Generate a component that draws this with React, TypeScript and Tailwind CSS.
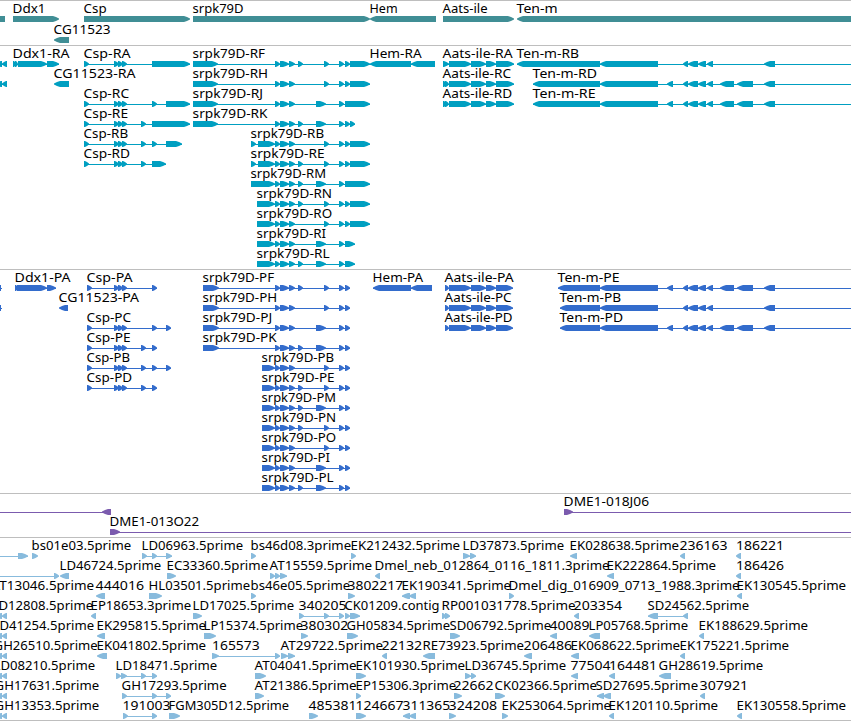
import React from "react";

type Span = [number, number];
type Label = [number, number, string];
type Dir = "R" | "L" | "B";

interface Feature {
  dir: Dir;
  spans: Span[];
  line?: Span;
  label?: Label;
}

type Row = Feature[];

const f = (dir: Dir, spans: Span[], label?: Label, line?: Span): Feature => ({ dir, spans, label, line });

const genes: Row[] = [
  [
    f("B", [[0, 5]]),
    f("R", [[13, 59]], [13, 45, "Ddx1"]),
    f("R", [[84, 190]], [84, 106, "Csp"]),
    f("R", [[193, 370]], [193, 243, "srpk79D"]),
    f("L", [[370, 436]], [370, 397, "Hem"]),
    f("R", [[443, 514]], [443, 487, "Aats-ile"]),
    f("L", [[517, 860]], [517, 557, "Ten-m"]),
  ],
  [f("L", [[54, 69]], [54, 110, "CG11523"])],
];

// Exons shared by the splice variants of each gene.
const cspMid: Span[] = [[114, 119], [118, 123], [122, 127]];
const c141: Span = [141, 146];
const c152: Span = [152, 157];
const c166: Span = [166, 171];
const kHead: Span[] = [[275, 280], [280, 289], [289, 295]];
const k298: Span = [298, 303];
const k316: Span = [316, 326];
const k324: Span = [324, 329];
const k339: Span = [339, 344];
const k345: Span = [345, 350];
const k350: Span = [350, 370];
const kWide: Span = [345, 370];
const tenTail: Span[] = [[683, 688], [688, 698], [698, 706], [707, 713], [764, 775]];
const tenFull: Span[] = [[667, 673], ...tenTail, [720, 734], [737, 753]];
const aats: Span[] = [[449, 471], [471, 486], [486, 496], [496, 514]];

const transcripts: Row[] = [
  [
    f("L", [[-5, 2], [2, 7]]),
    f("R", [[13, 16], [15, 18], [18, 47], [47, 59]], [13, 69, "Ddx1-RA"]),
    f("R", [[84, 89], ...cspMid, [152, 190]], [84, 130, "Csp-RA"]),
    f("R", [[193, 218], ...kHead, k298, k324, k339, k345, k350], [193, 264.5, "srpk79D-RF"]),
    f("L", [[370, 411], [411, 435]], [370, 421, "Hem-RA"]),
    f("R", [[443, 449], ...aats], [443, 512, "Aats-ile-RA"]),
    f("L", [[517, 600], [600, 658], ...tenTail], [517, 578.5, "Ten-m-RB"], [517, 851]),
  ],
  [
    f("L", [[-5, 2], [2, 7]]),
    f("L", [[54, 69]], [54, 135, "CG11523-RA"]),
    f("R", [[193, 218], ...kHead, k324, k339, k345, k350], [193, 267.5, "srpk79D-RH"]),
    f("R", [[443, 447], [445, 449], ...aats], [443, 510.5, "Aats-ile-RC"]),
    f("L", [[533, 600], [600, 658], ...tenFull], [533, 596.5, "Ten-m-RD"], [533, 851]),
  ],
  [
    f("R", [[84, 89], ...cspMid, c152, [166, 190]], [84, 128.5, "Csp-RC"]),
    f("R", [[193, 218], ...kHead, k316, k339, kWide], [193, 262.5, "srpk79D-RJ"]),
    f("R", [[443, 447], [445, 449], ...aats], [443, 511.5, "Aats-ile-RD"]),
    f("L", [[533, 600], [600, 658], ...tenFull], [533, 595, "Ten-m-RE"], [533, 851]),
  ],
  [
    f("R", [[84, 89], ...cspMid, c141, [152, 190]], [84, 127.5, "Csp-RE"]),
    f("R", [[193, 218], ...kHead, k298, k316, k339, k345, [350, 355]], [193, 267, "srpk79D-RK"]),
  ],
  [
    f("R", [[84, 89], ...cspMid, c141, c152, [166, 182]], [84, 127.5, "Csp-RB"]),
    f("R", [[251, 256], [258, 275], ...kHead, k324, k339, k345, k350], [251, 323.5, "srpk79D-RB"]),
  ],
  [
    f("R", [[84, 89], ...cspMid, c141, [152, 166]], [84, 129.5, "Csp-RD"]),
    f("R", [[251, 256], [258, 275], ...kHead, k298, k324, k339, k345, k350], [251, 324, "srpk79D-RE"]),
  ],
  [f("R", [[251, 275], ...kHead, k298, k316, k339, kWide], [251, 325.5, "srpk79D-RM"])],
  [f("R", [[257, 275], ...kHead, k298, k324, k339, k345, k350], [257, 331.5, "srpk79D-RN"])],
  [f("R", [[257, 275], ...kHead, k324, k339, k345, k350], [257, 331.5, "srpk79D-RO"])],
  [f("R", [[257, 275], ...kHead, k316, k339, [345, 355]], [257, 325.5, "srpk79D-RI"])],
  [f("R", [[257, 275], ...kHead, k298, k316, k339, [345, 355]], [257, 329, "srpk79D-RL"])],
];

const aatsP: Span[] = [[445, 449], [449, 471], [471, 486], [486, 496], [496, 513]];

const proteins: Row[] = [
  [
    f("B", [[0, 1]], undefined, [0, 2]),
    f("R", [[15, 18], [17, 47], [47, 56]], [15, 70, "Ddx1-PA"]),
    f("R", [[87, 92], ...cspMid, c152], [87, 132, "Csp-PA"]),
    f("R", [[203, 219], ...kHead, k298, k324, k339, k345], [203, 273.5, "srpk79D-PF"]),
    f("L", [[373, 411], [411, 432]], [373, 422.5, "Hem-PA"]),
    f("R", aatsP, [445, 513, "Aats-ile-PA"]),
    f("L", [[558, 600], [600, 658], ...tenFull], [558, 619, "Ten-m-PE"], [558, 851]),
  ],
  [
    f("B", [[0, 1]], undefined, [0, 2]),
    f("L", [[59, 68]], [59, 138.5, "CG11523-PA"]),
    f("R", [[203, 219], ...kHead, k324, k339, k345], [203, 276.5, "srpk79D-PH"]),
    f("R", aatsP, [445, 511, "Aats-ile-PC"]),
    f("L", [[560, 600], [600, 658], ...tenTail], [560, 620.5, "Ten-m-PB"], [560, 851]),
  ],
  [
    f("R", [[87, 92], ...cspMid, c152, c166], [87, 130.5, "Csp-PC"]),
    f("R", [[203, 219], ...kHead, k316, k339, k345], [203, 271.5, "srpk79D-PJ"]),
    f("R", aatsP, [445, 512, "Aats-ile-PD"]),
    f("L", [[560, 600], [600, 658], ...tenFull], [560, 622.5, "Ten-m-PD"], [560, 851]),
  ],
  [
    f("R", [[87, 92], ...cspMid, c141, c152], [87, 130, "Csp-PE"]),
    f("R", [[203, 219], ...kHead, k298, k316, k339, k345], [203, 276, "srpk79D-PK"]),
  ],
  [
    f("R", [[87, 92], ...cspMid, c141, c152, c166], [87, 129.5, "Csp-PB"]),
    f("R", [[262, 275], ...kHead, k324, k339, k345], [262, 333.5, "srpk79D-PB"]),
  ],
  [
    f("R", [[87, 92], ...cspMid, c141, c152], [87, 131.5, "Csp-PD"]),
    f("R", [[262, 275], ...kHead, k298, k324, k339, k345], [262, 334, "srpk79D-PE"]),
  ],
  [f("R", [[262, 275], ...kHead, k298, k316, k339, k345], [262, 335.5, "srpk79D-PM"])],
  [f("R", [[262, 275], ...kHead, k298, k324, k339, k345], [262, 335.5, "srpk79D-PN"])],
  [f("R", [[262, 275], ...kHead, k324, k339, k345], [262, 335.5, "srpk79D-PO"])],
  [f("R", [[262, 275], ...kHead, k316, k339, k345], [262, 329.5, "srpk79D-PI"])],
  [f("R", [[262, 275], ...kHead, k298, k316, k339, k345], [262, 333, "srpk79D-PL"])],
];

const clones: Row[] = [
  [
    f("L", [[102, 111]], undefined, [0, 111]),
    f("R", [[564, 573]], [564, 648.5, "DME1-018J06"], [564, 851]),
  ],
  [f("R", [[110, 120]], [110, 198.5, "DME1-013O22"], [110, 851])],
];

const edge = (label: Label): Feature => f("L", [[-5, 2], [2, 7]], label);

const ests: Row[] = [
  [
    f("R", [[18, 28]], undefined, [0, 28]),
    f("R", [[32, 38]], [32, 130.5, "bs01e03.5prime"]),
    f("R", [[142, 147], [152, 157], [166, 172]], [142, 242.5, "LD06963.5prime"]),
    f("R", [[251, 256]], [251, 350.5, "bs46d08.3prime"]),
    f("R", [[351, 356]], [351, 459.5, "EK212432.5prime"]),
    f("R", [[463, 470], [470, 476]], [463, 563.5, "LD37873.5prime"]),
    f("L", [[570, 577]], [570, 678.5, "EK028638.5prime"]),
    f("L", [[680, 685]], [680, 727, "236163"]),
    f("L", [[736, 741]], [736.5, 783.5, "186221"]),
  ],
  [
    f("R", [[54, 59]], undefined, [0, 59]),
    f("L", [[60, 69]], [60, 160.5, "LD46724.5prime"]),
    f("R", [[167, 176]], [167, 267.5, "EC33360.5prime"]),
    f("R", [[270, 275], [275, 280], [280, 287]], [270, 371.5, "AT15559.5prime"]),
    f("L", [[375, 380]], [375, 609, "Dmel_neb_012864_0116_1811.3prime"]),
    f("L", [[607, 614]], [607, 715.5, "EK222864.5prime"]),
    f("L", [[736, 741]], [736.5, 783.5, "186426"]),
  ],
  [
    f("R", [], [-8, 93.5, "AT13046.5prime"]),
    f("L", [[96, 105]], [96, 143.5, "444016"]),
    f("R", [[149, 162]], [149, 249.5, "HL03501.5prime"]),
    f("R", [[251, 256]], [251, 349.5, "bs46e05.5prime"]),
    f("R", [[348, 355]], [348, 402.5, "3802217"]),
    f("L", [[402, 410], [409, 416]], [402, 510.5, "EK190341.5prime"]),
    f("R", [[509, 514]], [509, 739, "Dmel_dig_016909_0713_1988.3prime"]),
    f("L", [[737, 742]], [737, 845.5, "EK130545.5prime"]),
  ],
  [
    edge([-8, 92.5, "LD12808.5prime"]),
    f("L", [[91, 96]], [91, 190.5, "EP18653.3prime"]),
    f("R", [[193, 202]], [193, 293.5, "LD17025.5prime"]),
    f("R", [[299, 304], [324, 329], [339, 344]], [299, 346, "340205"]),
    f("R", [[345, 350], [350, 360]], [345, 439, "CK01209.contig"]),
    f("R", [[442, 446], [445, 450]], [442, 575, "RP001031778.5prime"]),
    f("L", [[574, 579]], [574, 621.5, "203354"]),
    f("L", [[648, 658], [683, 688]], [648, 748.5, "SD24562.5prime"]),
  ],
  [
    edge([-7, 93.5, "LD41254.5prime"]),
    f("L", [[97, 105]], [97, 205.5, "EK295815.5prime"]),
    f("R", [[204, 216]], [204, 302.5, "LP15374.5prime"]),
    f("R", [[301, 308]], [301, 347.5, "380302"]),
    f("R", [[347, 358]], [347, 449.5, "GH05834.5prime"]),
    f("R", [[450, 460]], [450, 550.5, "SD06792.5prime"]),
    f("L", [[550, 557]], [550, 589, "40089"]),
    f("L", [[589, 600]], [589, 687.5, "LP05768.5prime"]),
    f("L", [[699, 704]], [699, 807.5, "EK188629.5prime"]),
  ],
  [
    edge([-6, 97, "GH26510.5prime"]),
    f("L", [[97, 107]], [97, 205.5, "EK041802.5prime"]),
    f("R", [[212, 219], [275, 280]], [212.5, 259, "165573"]),
    f("R", [[281, 288], [288, 295]], [281, 382.5, "AT29722.5prime"]),
    f("L", [[382, 387]], [382, 421.5, "22132"]),
    f("L", [[423, 435]], [423, 523.5, "RE73923.5prime"]),
    f("L", [[524, 532]], [524, 571.5, "206486"]),
    f("L", [[571, 579]], [571, 679.5, "EK068622.5prime"]),
    f("L", [[680, 685]], [680, 788.5, "EK175221.5prime"]),
  ],
  [
    edge([-6, 94.5, "LD08210.5prime"]),
    f("R", [[116, 121], [121, 127], [141, 146], [152, 157]], [116, 216.5, "LD18471.5prime"]),
    f("R", [[255, 266]], [255, 356, "AT04041.5prime"]),
    f("R", [[356, 366]], [356, 464.5, "EK101930.5prime"]),
    f("R", [[465, 471], [471, 476]], [465, 565.5, "LD36745.5prime"]),
    f("L", [[571, 578]], [571, 610, "77504"]),
    f("L", [[609, 615]], [609.5, 656.5, "164481"]),
    f("L", [[659, 671]], [659, 762.5, "GH28619.5prime"]),
  ],
  [
    edge([-5, 98.5, "GH17631.5prime"]),
    f("R", [[122, 127], [152, 157], [166, 171]], [122, 226, "GH17293.5prime"]),
    f("R", [[255, 264]], [255, 356, "AT21386.5prime"]),
    f("R", [[356, 361]], [356, 455.5, "EP15306.3prime"]),
    f("R", [[454, 462]], [454, 493, "22662"]),
    f("R", [[495, 505]], [495, 596.5, "CK02366.5prime"]),
    f("L", [[597, 604], [603, 611]], [596, 697.5, "SD27695.5prime"]),
    f("L", [[700, 705]], [700, 747.5, "307921"]),
  ],
  [
    edge([-5, 98.5, "GH13353.5prime"]),
    f("R", [[123, 128], [152, 157]], [123, 170, "191003"]),
    f("R", [[169, 180]], [169, 288.5, "FGM305D12.5prime"]),
    f("R", [[309, 318]], [309, 356, "485381"]),
    f("R", [[356, 366]], [356, 403, "124667"]),
    f("L", [[403, 410], [409, 416]], [403, 449.5, "311365"]),
    f("R", [[449, 456]], [449, 496.5, "324208"]),
    f("R", [[502, 508]], [502, 610.5, "EK253064.5prime"]),
    f("L", [[609, 614]], [609, 717.5, "EK120110.5prime"]),
    f("L", [[737, 742]], [737, 845.5, "EK130558.5prime"]),
  ],
];

function arrow(dir: Dir, [a, b]: Span, y: number): string {
  if (dir === "B") return `M${a} ${y}H${b}V${y + 6}H${a}Z`;
  const tip = Math.min(6, b - a - 1);
  const mid = tip / 2;
  if (dir === "R") {
    return `M${a} ${y}H${b - tip}L${b - mid} ${y + 1}L${b} ${y + 2.5}V${y + 3.5}L${b - mid} ${y + 5}L${b - tip} ${y + 6}H${a}Z`;
  }
  return `M${b} ${y}H${a + tip}L${a + mid} ${y + 1}L${a} ${y + 2.5}V${y + 3.5}L${a + mid} ${y + 5}L${a + tip} ${y + 6}H${b}Z`;
}

function Glyph({ feature, y }: { feature: Feature; y: number }) {
  const { dir, spans, label } = feature;
  const line: Span | undefined =
    feature.line ??
    (spans.length > 1
      ? [Math.min(...spans.map((s) => s[0])), Math.max(...spans.map((s) => s[1]))]
      : undefined);
  return (
    <g>
      {line && <rect x={line[0]} y={y + 6} width={line[1] - line[0]} height={1} />}
      {spans.map((s, i) => (
        <path key={i} d={arrow(dir, s, y + 3)} />
      ))}
      {label && (
        <text
          x={label[0] - 0.4}
          y={y}
          textLength={label[1] - label[0] + 1}
          lengthAdjust="spacingAndGlyphs"
          className="fill-black"
        >
          {label[2]}
        </text>
      )}
    </g>
  );
}

function Track({ rows, className, pitch = 20 }: { rows: Row[]; className: string; pitch?: number }) {
  return (
    <section className={`w-full shrink-0 border-t border-[#bebebe] ${className}`}>
      <svg className="block h-full w-full overflow-hidden font-['Noto_Sans',sans-serif] text-[12.3px]">
        {rows.map((row, r) => (
          <g key={r}>
            {row.map((feature, i) => (
              <Glyph key={i} feature={feature} y={12 + r * pitch} />
            ))}
          </g>
        ))}
      </svg>
    </section>
  );
}

export default function App() {
  return (
    <main className="flex h-[721px] w-[851px] flex-col overflow-hidden border-b border-[#bebebe] bg-white">
      <Track rows={genes} pitch={21} className="h-[45px] fill-[#408e95]" />
      <Track rows={transcripts} className="h-[224px] fill-[#009fc1]" />
      <Track rows={proteins} className="h-[224px] fill-[#336ccc]" />
      <Track rows={clones} className="h-[44px] fill-[#7b5bae]" />
      <Track rows={ests} className="h-[183px] fill-[#88bbdd]" />
    </main>
  );
}
